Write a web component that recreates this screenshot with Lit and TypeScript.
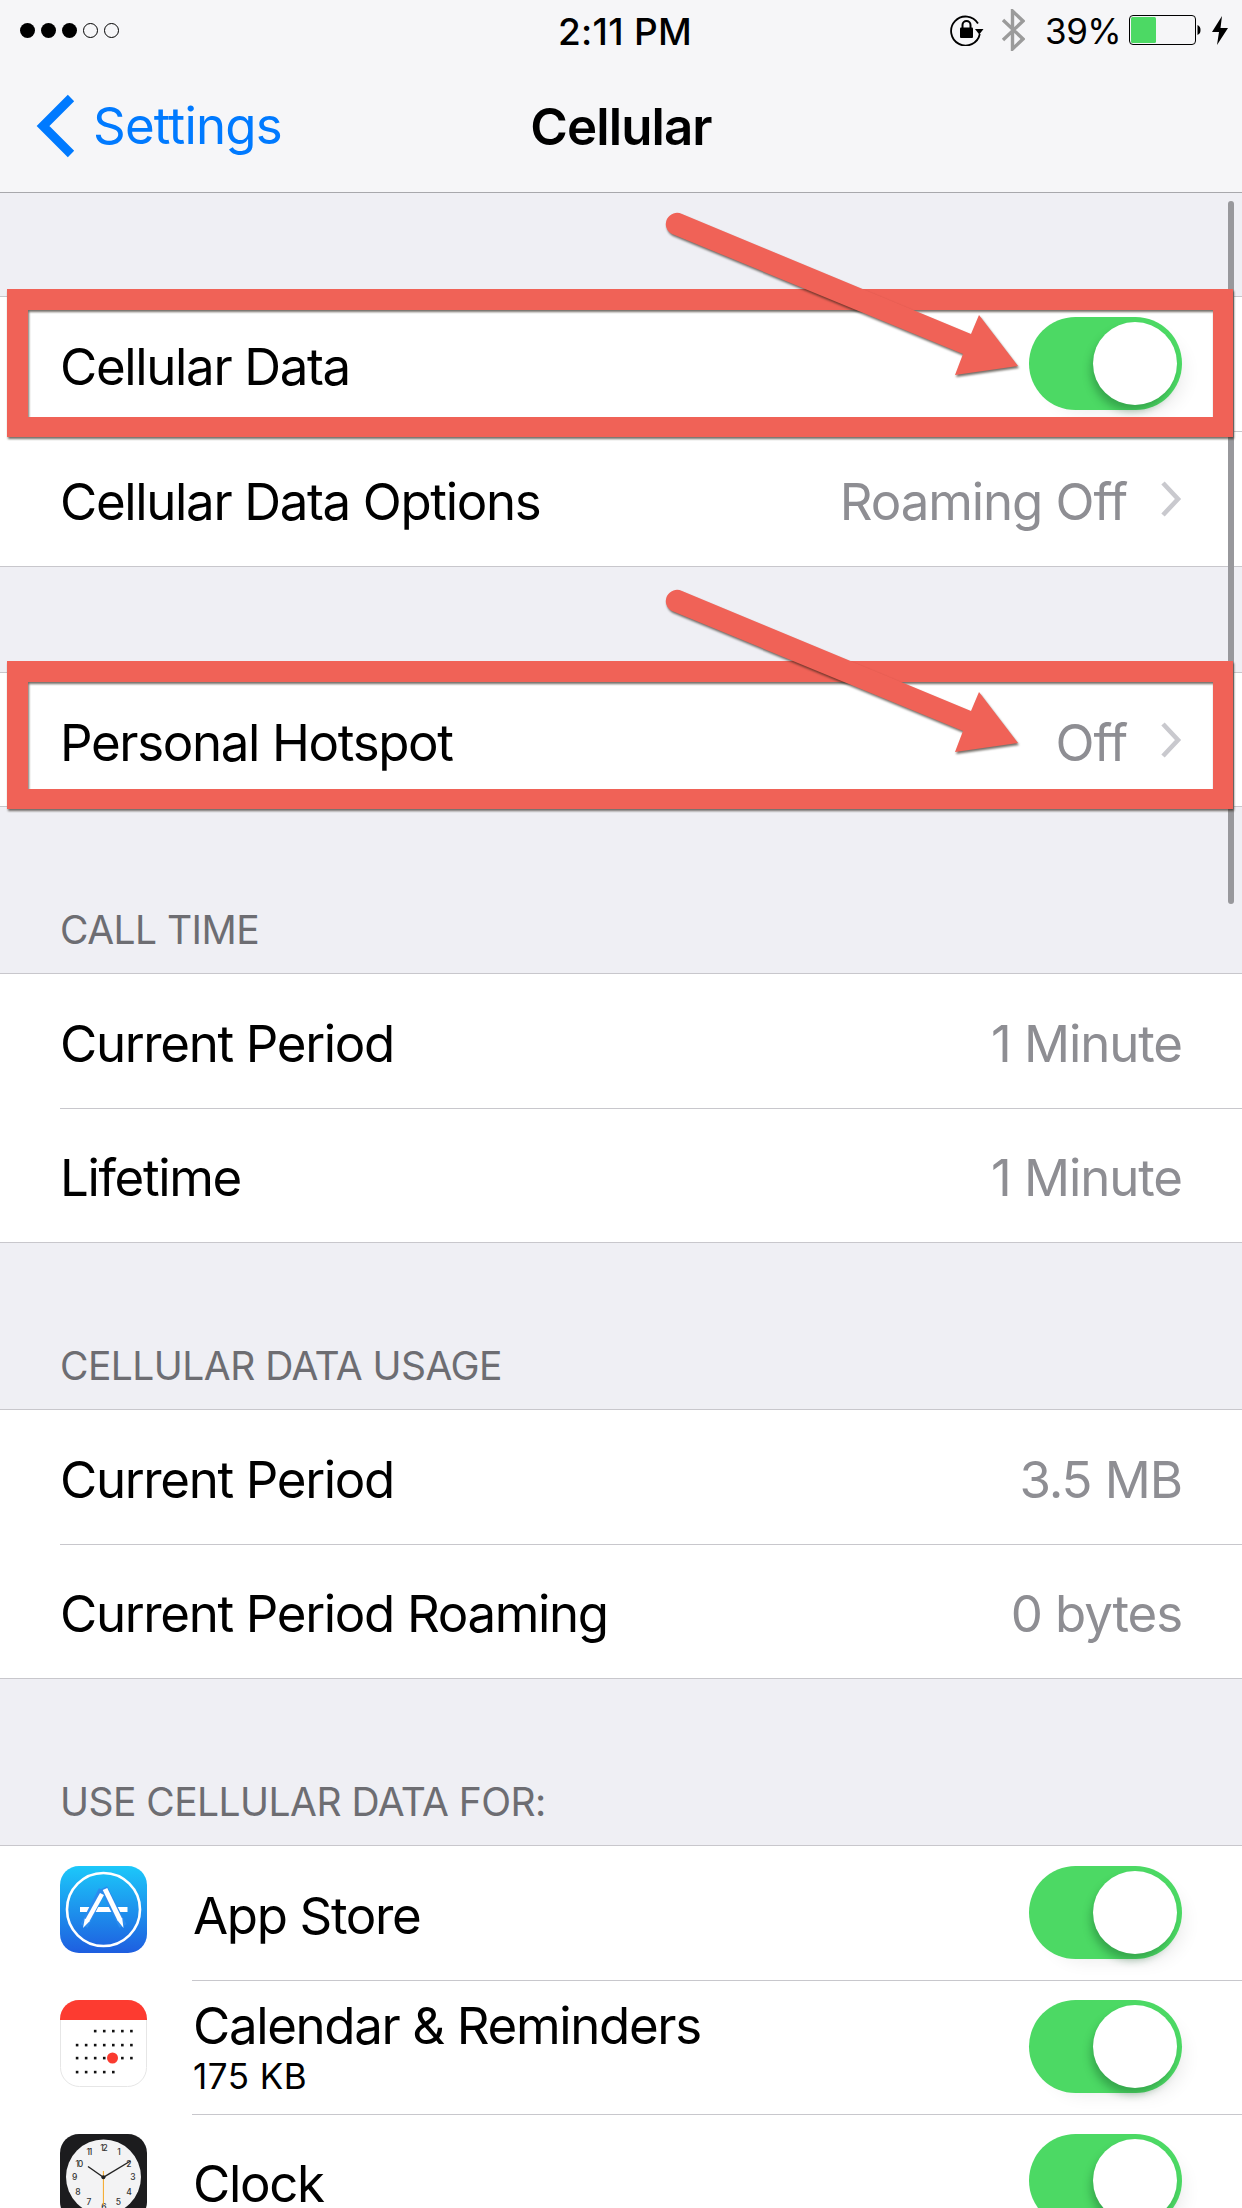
import { LitElement, html, css, svg } from "lit";
import { customElement } from "lit/decorators.js";

const FONT = css`Inter, "Liberation Sans", sans-serif`;

const chevron = html`<svg class="chev" viewBox="0 0 22 38"><path d="M3 3 L18 19 L3 35" fill="none" stroke="#c9c9ce" stroke-width="4.6"/></svg>`;

const appStoreIcon = html`<svg class="icon" viewBox="0 0 87 87">
  <defs><linearGradient id="as" x1="0" y1="0" x2="0" y2="1"><stop offset="0" stop-color="#1cc8fa"/><stop offset="1" stop-color="#1e5ee0"/></linearGradient></defs>
  <rect width="87" height="87" rx="19" fill="url(#as)"/>
  <circle cx="43.5" cy="43.5" r="36.5" fill="none" stroke="#fff" stroke-width="2.6"/>
  <rect x="20" y="41" width="47.5" height="5" fill="#fff"/>
  <path d="M42.5 24 L24 60" stroke="#2b8bee" stroke-width="8"/>
  <path d="M43.5 22 L63 60" stroke="#2b8bee" stroke-width="8"/>
  <path d="M42 28 L27 55" stroke="#fff" stroke-width="4.6"/>
  <path d="M45 23 L60 54" stroke="#fff" stroke-width="5"/>
  <path d="M24.8 52.5 L29.6 55.2 L23 62 Z M57.6 54.5 L62.2 52 L63.5 62 Z" fill="#fff"/>
</svg>`;

const calRows: [number[], number][] = [
  [[2, 3, 4, 5, 6], 31],
  [[0, 1, 2, 3, 4, 5, 6], 45],
  [[0, 1, 2, 3, 5, 6], 58],
  [[0, 1, 2, 3, 4], 72],
];
const calendarIcon = html`<svg class="icon" viewBox="0 0 87 87">
  <defs><clipPath id="calc"><rect width="87" height="87" rx="19"/></clipPath></defs>
  <rect x=".5" y=".5" width="86" height="86" rx="19" fill="#fff" stroke="#e6e6e6"/>
  <rect width="87" height="20" fill="#fd3b30" clip-path="url(#calc)"/>
  ${calRows.map(([cols, y]) =>
    cols.map((c) => svg`<rect x="${15.8 + c * 9.05}" y="${y - 1.2}" width="2.6" height="2.6" fill="#111"/>`)
  )}
  <circle cx="52.5" cy="58" r="5.5" fill="#fa3a2f"/>
</svg>`;

const clockNums: [string, number, number][] = [
  ["12", 43.3, 14], ["1", 58.3, 18.3], ["2", 68.3, 29.7], ["3", 72.3, 43.3],
  ["4", 68.3, 58.3], ["5", 57.7, 68], ["6", 43.3, 73], ["7", 28.3, 68],
  ["8", 17.3, 58.3], ["9", 14, 43.3], ["10", 18.7, 29.7], ["11", 28.7, 18.3],
];
const clockIcon = html`<svg class="icon" viewBox="0 0 87 87">
  <rect width="87" height="87" rx="19" fill="#1c1c1e"/>
  <circle cx="43.5" cy="43" r="37.5" fill="#f3f3f4"/>
  ${clockNums.map(([t, x, y]) => svg`<text x="${x}" y="${y + 3}" class="cn" text-anchor="middle">${t}</text>`)}
  <path d="M43.3 43.3 L28 32.5" stroke="#222" stroke-width="1.4"/>
  <path d="M43.3 43.3 L70.5 27" stroke="#222" stroke-width="1.4"/>
  <path d="M43.4 37 L43.4 71" stroke="#f5a623" stroke-width="1"/>
  <circle cx="43.4" cy="43.3" r="2" fill="#222"/>
</svg>`;

const toggle = html`<span class="toggle"><span class="knob"></span></span>`;

const arrow = svg`<path d="M682 214 L971 334 L979 315 L1018 366 L955 375 L963 354 L672 234 A11 11 0 0 1 682 214 Z"/>`;

@customElement("app-root")
export class AppRoot extends LitElement {
  static styles = css`
    :host {
      display: block; position: relative; width: 1242px; height: 2208px; overflow: hidden;
      background: #efeff4; font-family: ${FONT}; color: #000;
    }
    .bar { background: #f6f6f8; border-bottom: 1px solid #a8a8ac; }
    .status { height: 60px; display: grid; grid-template-columns: minmax(0, 1fr) auto minmax(0, 1fr); align-items: center; }
    .dots { display: flex; gap: 6px; padding-left: 20px; }
    .dot { width: 15px; height: 15px; border-radius: 50%; background: #000; box-sizing: border-box; }
    .dot.off { background: none; border: 1px solid #000; }
    .time { font-size: 37px; font-weight: 500; letter-spacing: 0.3px; padding: 2px 0 0 8px; }
    .right { display: flex; align-items: center; justify-content: flex-end; padding-right: 13px; }
    .pct { font-size: 35px; font-weight: 400; letter-spacing: -0.6px; margin: 2px 8px 0 20px; }
    .lock { width: 34px; height: 32px; margin-right: 17px; }
    .bt { width: 24px; height: 42px; }
    .batt { width: 72px; height: 30px; margin-right: 10px; }
    .bolt { width: 18px; height: 29px; }
    .nav { height: 132px; display: grid; grid-template-columns: 1fr auto 1fr; align-items: center; }
    .back { display: flex; align-items: center; color: #007aff; font-size: 51px; padding-left: 36px; gap: 17px; letter-spacing: -0.8px; }
    .back svg { width: 40px; height: 64px; }
    .back span { margin-top: -2px; }
    .title { font-size: 51px; font-weight: 600; letter-spacing: -0.9px; }
    .gap1 { height: 103px; }
    .gap2 { height: 105px; }
    .head {
      height: 166px; box-sizing: border-box; padding: 0 60px 20px; display: flex; align-items: flex-end;
      font-size: 39px; color: #6d6d72; letter-spacing: -0.55px; text-transform: uppercase;
    }
    .group { background: #fff; border-top: 1px solid #c8c7cc; border-bottom: 1px solid #c8c7cc; }
    .row {
      height: 134px; box-sizing: border-box; display: flex; align-items: center; padding: 5px 60px 0 60px;
      font-size: 51px; letter-spacing: -1.35px; position: relative;
    }
    .row.tall { height: 135px; }
    .row.short { height: 133px; }
    .row + .row::before {
      content: ""; position: absolute; left: 60px; right: 0; top: 0; height: 1px; background: #c8c7cc;
    }
    .row.app + .row.app::before { left: 192px; }
    .label { flex: 1; }
    .value { color: #8e8e93; letter-spacing: -1.1px; }
    .chev { width: 22px; height: 38px; margin-left: 33px; flex: none; margin-top: -5px; }
    .icon { width: 87px; height: 87px; flex: none; margin-right: 46px; margin-top: -12px; }
    .cn { font: 500 8.5px ${FONT}; fill: #333; }
    .two { margin-top: -7px; }
    .two div:first-child { line-height: 56px; }
    .two .sub { font-size: 35px; letter-spacing: 0.5px; line-height: 36px; margin-top: 4px; }
    .toggle { width: 153px; height: 93px; border-radius: 47px; background: #4cd964; position: relative; flex: none; margin-top: -6px; box-shadow: 10px 10px 18px -8px rgba(0,0,0,.08); }
    .knob {
      position: absolute; right: 5px; top: 5px; width: 84px; height: 83px; border-radius: 50%; background: #fff;
      box-shadow: -3px 7px 9px -1px rgba(20,90,40,.4);
    }
    .scroll { position: absolute; left: 1228px; top: 201px; width: 6px; height: 703px; border-radius: 3px; background: #98989c; }
    .overlay { position: absolute; inset: 0; width: 1242px; height: 2208px; pointer-events: none; }
    .mark { fill: #f06257; filter: drop-shadow(1.5px 2px 1.2px rgba(40,30,20,.65)); }
  `;

  render() {
    return html`
      <div class="bar">
        <div class="status">
          <div class="dots">
            <span class="dot"></span><span class="dot"></span><span class="dot"></span>
            <span class="dot off"></span><span class="dot off"></span>
          </div>
          <div class="time">2:11 PM</div>
          <div class="right">
            <svg class="lock" viewBox="0 0 34 32">
              <path d="M28 9.5 A14.5 14.5 0 1 0 29.8 20" fill="none" stroke="#000" stroke-width="1.8"/>
              <path d="M25 15 L33.5 15 L29.3 20.5 Z" fill="#000"/>
              <rect x="10" y="13.5" width="13" height="10.5" rx="1" fill="#000"/>
              <path d="M12.5 14 V11 A4 4 0 0 1 20.5 11 V14" fill="none" stroke="#000" stroke-width="2"/>
            </svg>
            <svg class="bt" viewBox="0 0 24 42"><path d="M2 11 L22 30 L11.5 40 V2 L22 12 L2 31" fill="none" stroke="#9b9b9b" stroke-width="3.4"/></svg>
            <span class="pct">39%</span>
            <svg class="batt" viewBox="0 0 72 30">
              <rect x=".5" y=".5" width="66" height="29" rx="3.5" fill="none" stroke="#000"/>
              <rect x="2" y="2" width="25" height="26" rx="1.5" fill="#4cd964"/>
              <path d="M68.5 10 C71 11 71.5 13 71.5 15 S71 19 68.5 20 Z" fill="#000"/>
            </svg>
            <svg class="bolt" viewBox="0 0 18 29"><path d="M11 0 L1 16 H8 L6 29 L17 12 H9.5 Z" fill="#000"/></svg>
          </div>
        </div>
        <div class="nav">
          <div class="back">
            <svg viewBox="0 0 40 64"><path d="M35 4 L7 32 L35 60" fill="none" stroke="#007aff" stroke-width="9"/></svg>
            <span>Settings</span>
          </div>
          <div class="title">Cellular</div>
          <div></div>
        </div>
      </div>

      <div class="gap1"></div>
      <div class="group">
        <div class="row"><span class="label">Cellular Data</span>${toggle}</div>
        <div class="row tall"><span class="label">Cellular Data Options</span><span class="value">Roaming Off</span>${chevron}</div>
      </div>
      <div class="gap2"></div>
      <div class="group">
        <div class="row short"><span class="label">Personal Hotspot</span><span class="value">Off</span>${chevron}</div>
      </div>

      <div class="head">Call Time</div>
      <div class="group">
        <div class="row"><span class="label">Current Period</span><span class="value">1 Minute</span></div>
        <div class="row"><span class="label">Lifetime</span><span class="value">1 Minute</span></div>
      </div>

      <div class="head">Cellular Data Usage</div>
      <div class="group">
        <div class="row"><span class="label">Current Period</span><span class="value">3.5 MB</span></div>
        <div class="row"><span class="label">Current Period Roaming</span><span class="value">0 bytes</span></div>
      </div>

      <div class="head">Use Cellular Data For:</div>
      <div class="group">
        <div class="row app">${appStoreIcon}<span class="label">App Store</span>${toggle}</div>
        <div class="row app">${calendarIcon}<div class="label two"><div>Calendar &amp; Reminders</div><div class="sub">175 KB</div></div>${toggle}</div>
        <div class="row app">${clockIcon}<span class="label">Clock</span>${toggle}</div>
      </div>

      <div class="scroll"></div>
      <svg class="overlay" viewBox="0 0 1242 2208">
        <g class="mark"><path fill-rule="evenodd" d="M7 289 H1233 V437 H7 Z M28 310 V417 H1213 V310 Z"/></g>
        <g class="mark"><path fill-rule="evenodd" d="M7 661 H1233 V809 H7 Z M28 682 V789 H1213 V682 Z"/></g>
        <g class="mark">${arrow}</g>
        <g class="mark" transform="translate(0 377)">${arrow}</g>
      </svg>
    `;
  }
}
